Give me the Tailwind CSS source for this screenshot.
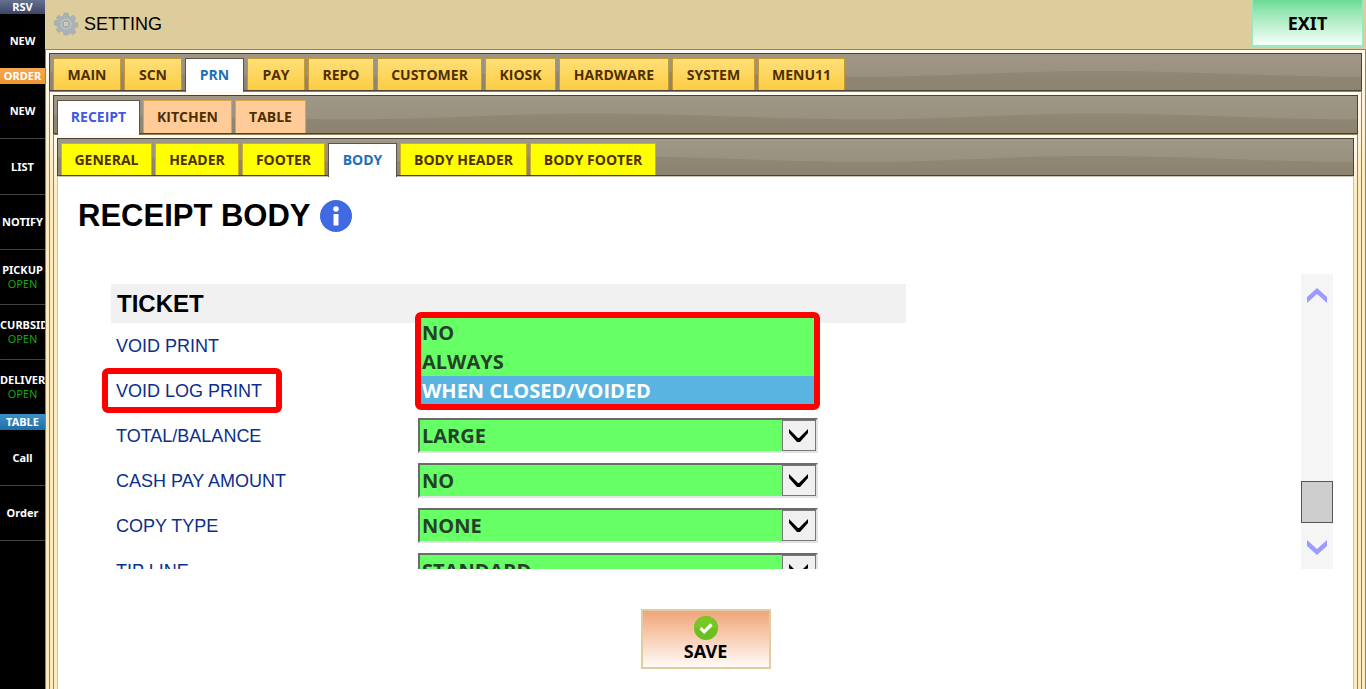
<!DOCTYPE html>
<html lang="en">
<head>
<meta charset="utf-8">
<title>Setting - Receipt Body</title>
<script src="https://cdn.jsdelivr.net/npm/@tailwindcss/browser@4"></script>
</head>
<body class="flex h-screen overflow-hidden bg-white font-['Liberation_Sans',sans-serif]">
<svg class="hidden">
  <symbol id="wave" viewBox="0 0 1312 38" preserveAspectRatio="none">
    <path d="M0 19 C90 19 200 24 300 24 C390 24 450 18 540 18 C640 18 720 24 820 24 C900 24 960 18 1050 18 C1140 18 1220 24 1312 24 V38 H0Z" fill="#6f6650" fill-opacity=".24"/>
  </symbol>
  <symbol id="chev" viewBox="0 0 20 14"><path d="M0 0 L9 9 H10 L19 0 V4 L11 13 H8 L0 4Z" fill="currentColor"/></symbol>
</svg>

<nav class="w-[45px] shrink-0 overflow-hidden bg-black text-center font-['Noto_Sans',sans-serif] text-[11px] leading-[14px] font-bold text-white">
  <h2 class="h-[14px] bg-linear-to-b from-[#66708f] to-[#3d4668] leading-[13px]">RSV</h2>
  <button class="block h-[54px] w-full">NEW</button>
  <h2 class="h-4 bg-linear-to-b from-[#f7a94f] to-[#ef9433] leading-4">ORDER</h2>
  <button class="block h-[55px] w-full border-b border-[#444]">NEW</button>
  <button class="block h-14 w-full border-b border-[#444]">LIST</button>
  <button class="block h-[55px] w-full border-b border-[#444]">NOTIFY</button>
  <button class="block h-[55px] w-full border-b border-[#444]">PICKUP<br><span class="font-normal text-[#12a812]">OPEN</span></button>
  <button class="block h-[55px] w-full border-b border-[#444]">CURBSIDE<br><span class="font-normal text-[#12a812]">OPEN</span></button>
  <button class="block h-[54px] w-full">DELIVERY<br><span class="font-normal text-[#12a812]">OPEN</span></button>
  <h2 class="h-4 bg-linear-to-b from-[#3b92c6] to-[#1f6ea5] leading-4">TABLE</h2>
  <button class="block h-14 w-full border-b border-[#444]">Call</button>
  <button class="block h-[55px] w-full border-b border-[#444]">Order</button>
</nav>

<div class="flex min-w-0 flex-1 flex-col">
  <header class="flex h-[49px] shrink-0 items-start bg-[#decd9c] pr-[2px] pl-[9px]">
    <div class="flex h-12 flex-1 items-center gap-[6px]">
      <svg class="size-6" viewBox="0 0 24 24">
        <path d="M10 1h4l.6 3 2 .9 2.600-1.700 2.700 2.700-1.700 2.600.8 2 3 .6v3.600l-3 .7-.8 2 1.700 2.600-2.700 2.700-2.600-1.700-2 .8L14 23h-4l-.6-3.200-2-.8-2.600 1.700-2.700-2.700 1.700-2.600-.8-2-3-.7v-3.600l3-.6.8-2L2.100 5.900l2.700-2.700 2.600 1.700 2-.9z" fill="#a9b2b5" stroke="#98a2a6" stroke-width=".5"/>
        <circle cx="12" cy="12" r="6.500" fill="#b4bec2" stroke="#a0abaf" stroke-width=".6"/>
        <circle cx="12" cy="12" r="3" fill="#d6d2bd" stroke="#8c979b" stroke-width=".9"/>
        <circle cx="12" cy="12" r="1" fill="#b3b8b0"/>
      </svg>
      <h1 class="text-lg">SETTING</h1>
    </div>
    <button class="h-[47px] w-[113px] border-2 border-t-0 border-[#9be8c0] bg-linear-to-b from-[#6bdc98] to-[#f6fffa] font-['Noto_Sans',sans-serif] text-lg font-bold">EXIT</button>
  </header>

  <div class="flex flex-1 flex-col border border-b-0 border-[#8f855f] bg-linear-to-b from-[#fffaf0] to-[#fdeabe] to-[120px] px-[3px] pt-[3px]">
    <div class="relative flex h-[38px] shrink-0 items-stretch gap-[3px] border border-[#4a4335] bg-linear-to-b from-[#9f9787] to-[#968d7b] pt-1 pl-[3px] font-['Open_Sans',sans-serif] text-sm font-bold text-[#4d2f00]">
      <svg class="absolute inset-0 h-full w-full"><use href="#wave"/></svg>
      <button class="relative w-[68px] border border-b-0 border-[#c7992c] bg-linear-to-b from-[#ffdf75] to-[#fccd42]">MAIN</button>
      <button class="relative w-[58px] border border-b-0 border-[#c7992c] bg-linear-to-b from-[#ffdf75] to-[#fccd42]">SCN</button>
      <button class="relative -mb-[2px] w-[59px] border border-b-0 border-[#5c5545] bg-white pb-[2px] text-[#1c72b8]">PRN</button>
      <button class="relative w-[58px] border border-b-0 border-[#c7992c] bg-linear-to-b from-[#ffdf75] to-[#fccd42]">PAY</button>
      <button class="relative w-[66px] border border-b-0 border-[#c7992c] bg-linear-to-b from-[#ffdf75] to-[#fccd42]">REPO</button>
      <button class="relative w-[105px] border border-b-0 border-[#c7992c] bg-linear-to-b from-[#ffdf75] to-[#fccd42]">CUSTOMER</button>
      <button class="relative w-[71px] border border-b-0 border-[#c7992c] bg-linear-to-b from-[#ffdf75] to-[#fccd42]">KIOSK</button>
      <button class="relative w-[110px] border border-b-0 border-[#c7992c] bg-linear-to-b from-[#ffdf75] to-[#fccd42]">HARDWARE</button>
      <button class="relative w-[83px] border border-b-0 border-[#c7992c] bg-linear-to-b from-[#ffdf75] to-[#fccd42]">SYSTEM</button>
      <button class="relative w-[87px] border border-b-0 border-[#c7992c] bg-linear-to-b from-[#ffdf75] to-[#fccd42]">MENU11</button>
    </div>

    <div class="flex flex-1 flex-col border border-b-0 border-[#8f855f] bg-linear-to-b from-[#fffaf0] to-[#fdeabe] to-[90px] px-[3px] pt-[3px]">
      <div class="relative flex h-[39px] shrink-0 items-stretch gap-[3px] border border-[#4a4335] bg-linear-to-b from-[#9f9787] to-[#968d7b] pt-1 pl-[3px] font-['Open_Sans',sans-serif] text-sm font-bold text-[#4d2f00]">
        <svg class="absolute inset-0 h-full w-full"><use href="#wave"/></svg>
        <button class="relative -mb-[2px] w-[83px] border border-b-0 border-[#5c5545] bg-white pb-[2px] text-[#4358e0]">RECEIPT</button>
        <button class="relative w-[89px] border border-b-0 border-[#d9a441] bg-[#ffcb99]">KITCHEN</button>
        <button class="relative w-[71px] border border-b-0 border-[#d9a441] bg-[#ffcb99]">TABLE</button>
      </div>

      <div class="flex flex-1 flex-col border border-b-0 border-[#8f855f] bg-linear-to-b from-[#fffaf0] to-[#fdeabe] to-[60px] px-[3px] pt-[3px]">
        <div class="relative flex h-[38px] shrink-0 items-stretch gap-[3px] border border-[#4a4335] bg-linear-to-b from-[#9f9787] to-[#968d7b] pt-1 pl-[3px] font-['Open_Sans',sans-serif] text-sm font-bold text-[#4d2f00]">
          <svg class="absolute inset-0 h-full w-full"><use href="#wave"/></svg>
          <button class="relative w-[91px] border border-b-0 border-[#d0b020] bg-[#ffff00]">GENERAL</button>
          <button class="relative w-[84px] border border-b-0 border-[#d0b020] bg-[#ffff00]">HEADER</button>
          <button class="relative w-[83px] border border-b-0 border-[#d0b020] bg-[#ffff00]">FOOTER</button>
          <button class="relative -mb-[2px] w-[69px] border border-b-0 border-[#5c5545] bg-white pb-[2px] text-[#1c72b8]">BODY</button>
          <button class="relative w-[127px] border border-b-0 border-[#d0b020] bg-[#ffff00]">BODY HEADER</button>
          <button class="relative w-[126px] border border-b-0 border-[#d0b020] bg-[#ffff00]">BODY FOOTER</button>
        </div>

        <main class="flex flex-1 flex-col border border-b-0 border-[#c9c4b4] bg-white pt-[23px]">
          <div class="flex h-8 items-center gap-[9px] pl-5">
            <h2 class="text-[31px] leading-8 font-bold">RECEIPT BODY</h2>
            <button aria-label="Information">
              <svg class="size-8" viewBox="0 0 32 32"><circle cx="16" cy="16" r="16" fill="#4169e1"/><circle cx="16" cy="9" r="2.800" fill="#fff"/><path d="M13.500 14h5v11.500h-5z" fill="#fff"/></svg>
            </button>
          </div>

          <div class="mt-[42px] mr-5 ml-[53px] flex h-[295px] justify-between">
            <div class="-ml-[10px] w-[805px] overflow-hidden pt-[10px] pl-[10px]">
              <h3 class="flex h-[39px] items-center bg-[#f1f1f1] pl-[6px] text-2xl font-bold">TICKET</h3>
              <div class="relative flex h-[45px] items-center pl-[5px]">
                <label for="f1" class="w-[302px] text-lg text-[#0a2f8c]">VOID PRINT</label>
                <select id="f1" class="h-[35px] w-[400px] appearance-none border-2 border-t-[#6b6b6b] border-r-[#e3e3e3] border-b-[#e3e3e3] border-l-[#6b6b6b] bg-[#66ff66]"><option></option></select>
                <ul role="listbox" aria-label="VOID LOG PRINT" class="absolute -top-[11px] left-[304px] z-10 h-[98px] w-[405px] overflow-hidden rounded-md border-[6px] border-[#fe0000] bg-[#66ff66] font-['Open_Sans',sans-serif] text-xl leading-[29px] font-bold text-[#26402a]">
                  <li role="option" class="pl-px">NO</li>
                  <li role="option" class="pl-px">ALWAYS</li>
                  <li role="option" aria-selected="true" class="bg-[#5ab4e2] pl-px text-white">WHEN CLOSED/VOIDED</li>
                </ul>
              </div>
              <div class="relative flex h-[45px] items-center pl-[5px]">
                <label for="f2" class="w-[302px] text-lg text-[#0a2f8c]">VOID LOG PRINT</label>
                <select id="f2" class="h-[35px] w-[400px] appearance-none border-2 border-t-[#6b6b6b] border-r-[#e3e3e3] border-b-[#e3e3e3] border-l-[#6b6b6b] bg-[#66ff66]"><option></option></select>
                <span class="pointer-events-none absolute inset-y-0 -left-[9px] w-[180px] rounded-md border-[6px] border-[#fe0000]"></span>
              </div>
              <div class="flex h-[45px] items-center pl-[5px]">
                <label for="f3" class="w-[302px] text-lg text-[#0a2f8c]">TOTAL/BALANCE</label>
                <div class="relative">
                  <select id="f3" class="h-[35px] w-[400px] appearance-none border-2 border-t-[#6b6b6b] border-r-[#e3e3e3] border-b-[#e3e3e3] border-l-[#6b6b6b] bg-[#66ff66] pt-px pl-[2px] font-['Open_Sans',sans-serif] text-xl font-bold text-[#26402a]"><option>LARGE</option></select>
                  <span class="pointer-events-none absolute top-[2px] right-[2px] flex h-[31px] w-[34px] items-center justify-center border border-[#777] bg-[#f0f0f0] text-black"><svg class="h-[14px] w-5"><use href="#chev"/></svg></span>
                </div>
              </div>
              <div class="flex h-[45px] items-center pl-[5px]">
                <label for="f4" class="w-[302px] text-lg text-[#0a2f8c]">CASH PAY AMOUNT</label>
                <div class="relative">
                  <select id="f4" class="h-[35px] w-[400px] appearance-none border-2 border-t-[#6b6b6b] border-r-[#e3e3e3] border-b-[#e3e3e3] border-l-[#6b6b6b] bg-[#66ff66] pt-px pl-[2px] font-['Open_Sans',sans-serif] text-xl font-bold text-[#26402a]"><option>NO</option></select>
                  <span class="pointer-events-none absolute top-[2px] right-[2px] flex h-[31px] w-[34px] items-center justify-center border border-[#777] bg-[#f0f0f0] text-black"><svg class="h-[14px] w-5"><use href="#chev"/></svg></span>
                </div>
              </div>
              <div class="flex h-[45px] items-center pl-[5px]">
                <label for="f5" class="w-[302px] text-lg text-[#0a2f8c]">COPY TYPE</label>
                <div class="relative">
                  <select id="f5" class="h-[35px] w-[400px] appearance-none border-2 border-t-[#6b6b6b] border-r-[#e3e3e3] border-b-[#e3e3e3] border-l-[#6b6b6b] bg-[#66ff66] pt-px pl-[2px] font-['Open_Sans',sans-serif] text-xl font-bold text-[#26402a]"><option>NONE</option></select>
                  <span class="pointer-events-none absolute top-[2px] right-[2px] flex h-[31px] w-[34px] items-center justify-center border border-[#777] bg-[#f0f0f0] text-black"><svg class="h-[14px] w-5"><use href="#chev"/></svg></span>
                </div>
              </div>
              <div class="flex h-[45px] items-center pl-[5px]">
                <label for="f6" class="w-[302px] text-lg text-[#0a2f8c]">TIP LINE</label>
                <div class="relative">
                  <select id="f6" class="h-[35px] w-[400px] appearance-none border-2 border-t-[#6b6b6b] border-r-[#e3e3e3] border-b-[#e3e3e3] border-l-[#6b6b6b] bg-[#66ff66] pt-px pl-[2px] font-['Open_Sans',sans-serif] text-xl font-bold text-[#26402a]"><option>STANDARD</option></select>
                  <span class="pointer-events-none absolute top-[2px] right-[2px] flex h-[31px] w-[34px] items-center justify-center border border-[#777] bg-[#f0f0f0] text-black"><svg class="h-[14px] w-5"><use href="#chev"/></svg></span>
                </div>
              </div>
            </div>

            <div class="flex w-8 flex-col bg-[#f5f5f5] text-[#9c9cff]">
              <button aria-label="Scroll up" class="flex h-[43px] items-center justify-center"><svg class="h-[15px] w-5 rotate-180" viewBox="0 0 20 15"><path d="M0 0 L10 9 L20 0 V6 L10 15 L0 6Z" fill="currentColor"/></svg></button>
              <div class="flex flex-1 flex-col justify-end"><div class="h-[42px] border border-[#555] bg-[#cdcdcd]"></div></div>
              <button aria-label="Scroll down" class="flex h-[46px] items-center justify-center pt-[2px]"><svg class="h-[15px] w-5" viewBox="0 0 20 15"><path d="M0 0 L10 9 L20 0 V6 L10 15 L0 6Z" fill="currentColor"/></svg></button>
            </div>
          </div>

          <button class="mt-10 flex h-[60px] w-[130px] flex-col items-center self-center border-2 border-[#e0cd9f] bg-linear-to-b from-[#efa578] to-[#fffaf7] pt-[5px] font-['Noto_Sans',sans-serif] text-lg leading-[22px] font-bold">
            <svg class="size-6 shrink-0" viewBox="0 0 24 24"><circle cx="12" cy="12" r="12" fill="#6cbf20"/><path d="M0 12a12 12 0 0 1 24 0z" fill="#78c724"/><path d="M6.500 12.200l3.700 3.600 7.300-7.300" fill="none" stroke="#fff" stroke-width="3.200"/></svg>
            SAVE
          </button>
        </main>
      </div>
    </div>
  </div>
</div>
</body>
</html>
